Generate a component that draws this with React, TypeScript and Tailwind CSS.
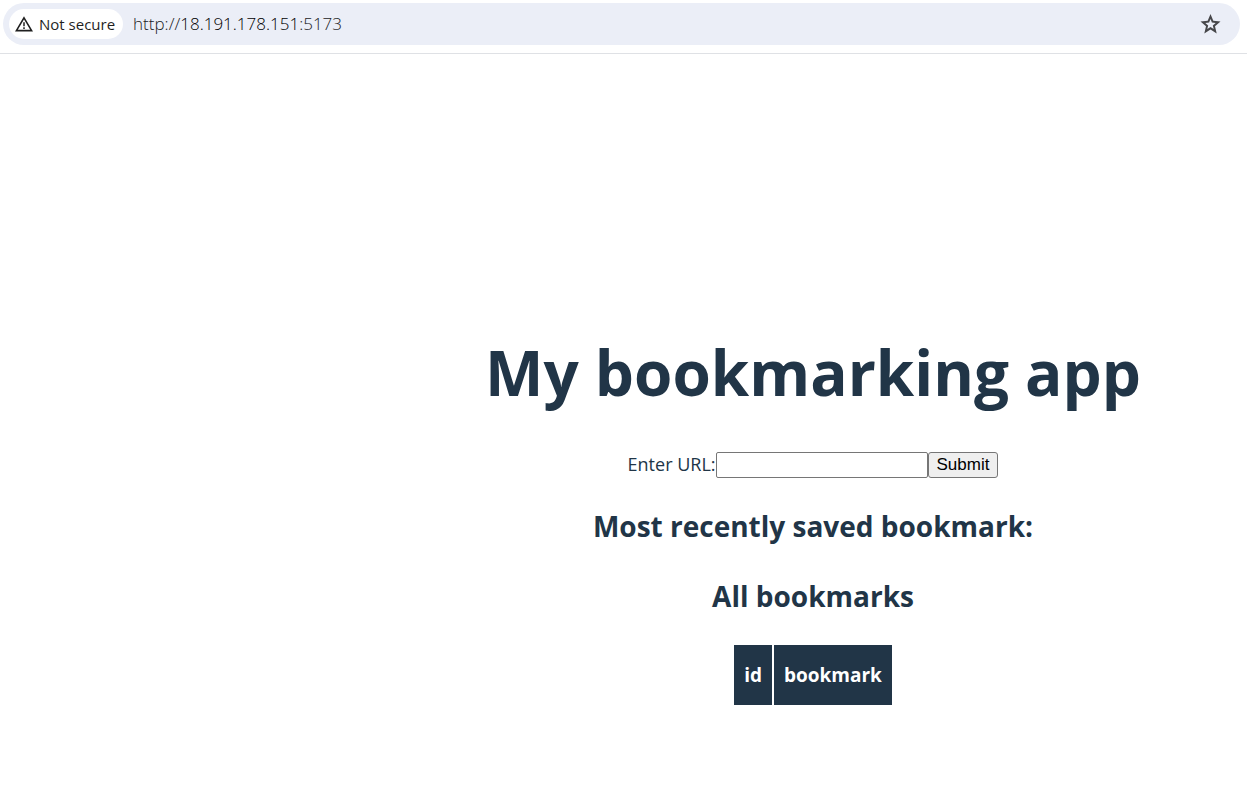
import { useState, type FormEvent } from 'react';

function AddressBar() {
  return (
    <header className="border-b border-[#dfe1e5] pt-[3px] pr-[7px] pb-2 pl-[3px]">
      <div className="flex h-[42px] items-center rounded-full bg-[#ebeef7] pr-4 pl-[6px]">
        <button
          type="button"
          className="flex h-[30px] shrink-0 items-center gap-[6px] rounded-full bg-white pr-2 pl-[6px] text-[15px] leading-5 text-[#1f1f1f]"
        >
          <svg viewBox="0 0 18 16" className="h-4 w-[18px]" fill="none" aria-hidden="true">
            <path d="M9 1.8 16.6 14.6H1.4Z" stroke="currentColor" strokeWidth="1.6" />
            <path d="M9 6.2v4M9 11.2v1.7" stroke="currentColor" strokeWidth="1.5" />
          </svg>
          Not secure
        </button>
        <p className="ml-[10px] grow text-[17px] leading-6 font-light text-[#202124]">
          http://<span className="text-black">18.191.178.151</span>:5173
        </p>
        <button type="button" aria-label="Bookmark this page" className="flex size-7 items-center justify-center text-[#47474a]">
          <svg viewBox="0 0 24 24" className="size-6" fill="currentColor" aria-hidden="true">
            <path
              fillRule="evenodd"
              d="M12.5 2 15.3 8.8 22.5 9.4 17 14.2 18.7 21.4 12.5 17.5 6.3 21.4 8 14.2 2.5 9.4 9.7 8.8ZM12.5 6.9 11.1 10.6 7.3 10.9 10.2 13.4 9.3 17.1 12.5 15.1 15.7 17.1 14.8 13.4 17.7 10.9 13.9 10.6Z"
            />
          </svg>
        </button>
      </div>
    </header>
  );
}

export default function App() {
  const [url, setUrl] = useState('');
  const [saved, setSaved] = useState<string[]>([]);

  const submit = (event: FormEvent) => {
    event.preventDefault();
    if (url) {
      setSaved([...saved, url]);
      setUrl('');
    }
  };

  return (
    <div className="min-h-screen bg-white font-['Open_Sans','Noto_Sans',sans-serif] text-[#213547]">
      <AddressBar />
      <main className="flex flex-col items-center pt-[283px] pb-8 pl-[379px]">
        <h1 className="text-[62px] leading-[70px] font-bold whitespace-nowrap">My bookmarking app</h1>
        <form onSubmit={submit} className="mt-[45px] flex h-[26px] items-start">
          <label htmlFor="url" className="text-lg leading-6">
            Enter URL:
          </label>
          <input
            id="url"
            value={url}
            onChange={(event) => setUrl(event.target.value)}
            className="h-[26px] w-[212px] rounded-[2px] border border-[#767676] bg-white px-1 font-['Liberation_Sans',Arial,sans-serif] text-base text-black"
          />
          <button
            type="submit"
            className="h-[26px] rounded-[3px] border border-[#767676] bg-[#efefef] px-2 font-['Liberation_Sans',Arial,sans-serif] text-[17px] leading-6 text-black"
          >
            Submit
          </button>
        </form>
        <h2 className="mt-7 text-[28px] leading-10 font-bold">Most recently saved bookmark: {saved.at(-1)}</h2>
        <h2 className="mt-[30px] text-[28px] leading-10 font-bold">All bookmarks</h2>
        <table className="mt-[27px] border-separate border-spacing-[2px]">
          <thead>
            <tr className="text-[19px] leading-7 text-white">
              <th className="h-[60px] bg-[#213547] px-[10px] font-bold">id</th>
              <th className="h-[60px] bg-[#213547] px-[10px] font-bold">bookmark</th>
            </tr>
          </thead>
          <tbody>
            {saved.map((bookmark, index) => (
              <tr key={index}>
                <td className="px-[10px]">{index + 1}</td>
                <td className="px-[10px]">{bookmark}</td>
              </tr>
            ))}
          </tbody>
        </table>
      </main>
    </div>
  );
}
